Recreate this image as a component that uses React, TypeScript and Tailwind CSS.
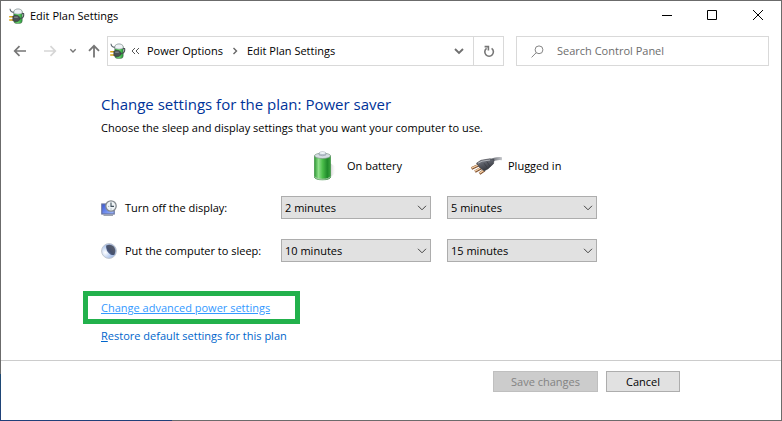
import React from "react";

type IconProps = { className?: string };

function PowerIcon({ className }: IconProps) {
  return (
    <svg className={className} width="16" height="16" viewBox="0 0 16 16" aria-hidden="true">
      <defs>
        <linearGradient id="pw-green" x1="0" x2="1">
          <stop offset="0" stopColor="#2a8f3a" />
          <stop offset="0.5" stopColor="#6fe070" />
          <stop offset="1" stopColor="#1f9433" />
        </linearGradient>
      </defs>
      <rect x="4.8" y="1.6" width="8.4" height="13.8" rx="2.6" fill="url(#pw-green)" stroke="#5c6a60" strokeWidth="0.6" />
      <path d="M5 5.4V3.2Q5.4 1 9 1t4 2.2v2.2q-4 1.4-8 0z" fill="#eef2f6" stroke="#9aa3a8" strokeWidth="0.6" />
      <rect x="7.2" y="0.2" width="3.6" height="1.4" rx="0.6" fill="#c5ccd0" />
      <path d="M1 0.8q0.4 3.4 3.6 3.6" fill="none" stroke="#59636b" strokeWidth="1.1" />
      <path d="M12.8 5.6h1.8q0.8 4.2-3.4 5.2" fill="none" stroke="#4a5256" strokeWidth="1.1" />
      <path d="M0.2 8.8h4M0.2 12h4" stroke="#d9a514" strokeWidth="1.6" />
      <path d="M3.8 8.2 6 7.6h3l2 1.8v2.2l-2 1.8H6l-2.2-.8z" fill="#4b5053" stroke="#2b2f31" strokeWidth="0.5" />
      <path d="M5.2 9.2h3.6" stroke="#9aa1a5" strokeWidth="0.9" />
    </svg>
  );
}

function BatteryIcon({ className }: IconProps) {
  return (
    <svg className={className} width="24" height="32" viewBox="0 0 24 32" aria-hidden="true">
      <defs>
        <linearGradient id="bt-green" x1="0" x2="1">
          <stop offset="0" stopColor="#2f9a35" />
          <stop offset="0.25" stopColor="#8fe08a" />
          <stop offset="0.5" stopColor="#4cbf4b" />
          <stop offset="0.8" stopColor="#1f8a2a" />
          <stop offset="1" stopColor="#3aa23d" />
        </linearGradient>
        <linearGradient id="bt-shadow" x1="0" x2="1">
          <stop offset="0" stopColor="#909090" stopOpacity="0.7" />
          <stop offset="1" stopColor="#ffffff" stopOpacity="0" />
        </linearGradient>
      </defs>
      <path d="M16 29 23 22V17l-6-4z" fill="url(#bt-shadow)" />
      <path d="M1.5 5.8v21.4q1 2.6 8 2.6t8-2.6V5.8z" fill="url(#bt-green)" stroke="#3a8f40" strokeWidth="0.7" />
      <path d="M1.8 26.6q1.4 2.6 7.7 2.6t7.7-2.6" fill="none" stroke="#b5c8b5" strokeWidth="0.9" />
      <ellipse cx="9.5" cy="5.8" rx="8" ry="2.7" fill="#d5dce2" stroke="#7f9a87" strokeWidth="0.7" />
      <path d="M6 5V3.2q0.4-1.4 3.5-1.4T13 3.2V5q-3.5 1.6-7 0z" fill="#b7c0cb" stroke="#8b949f" strokeWidth="0.5" />
      <ellipse cx="9.5" cy="3" rx="3" ry="1" fill="#eff3f6" />
    </svg>
  );
}

function PlugIcon({ className }: IconProps) {
  return (
    <svg className={className} width="32" height="20" viewBox="0 0 32 20" aria-hidden="true">
      <defs>
        <linearGradient id="pl-body" x1="0" y1="0" x2="0.5" y2="1">
          <stop offset="0" stopColor="#8d9098" />
          <stop offset="0.5" stopColor="#5a5d66" />
          <stop offset="1" stopColor="#33353c" />
        </linearGradient>
        <linearGradient id="pl-cord" gradientUnits="userSpaceOnUse" x1="20" y1="0" x2="32" y2="0">
          <stop offset="0" stopColor="#5a5d66" />
          <stop offset="1" stopColor="#c6c8cc" />
        </linearGradient>
      </defs>
      <path d="M20 5.5q5-3.6 12-2.8" fill="none" stroke="url(#pl-cord)" strokeWidth="3" />
      <path d="M1.5 12.6 9 9M5 15.6l7-4M9.5 17.6l5-3.4" stroke="#7a4c2c" strokeWidth="2.8" />
      <path d="M1.5 12.2 9 8.6M5 15.2l7-4M9.5 17.2l5-3.4" stroke="#f3cda2" strokeWidth="1.4" />
      <path d="M6.5 7.2 11 4.3 20 2.8l4 .7-.5 4.2-5.3 5-4 2.2-4.5-3.4z" fill="url(#pl-body)" stroke="#3c3e45" strokeWidth="0.6" />
      <path d="M8 7.2 12 5.2l8-1.2" fill="none" stroke="#b3b5bb" strokeWidth="1" />
      <path d="M14 7.2 17 11.4M17 5.6l3 4.8" stroke="#34363c" strokeWidth="0.6" />
    </svg>
  );
}

function DisplayIcon({ className }: IconProps) {
  return (
    <svg className={className} width="16" height="16" viewBox="0 0 16 16" aria-hidden="true">
      <defs>
        <linearGradient id="ds-blue" x1="0" y1="0" x2="1" y2="1">
          <stop offset="0" stopColor="#3454d8" />
          <stop offset="1" stopColor="#a5bfff" />
        </linearGradient>
      </defs>
      <rect x="0.8" y="4" width="12.4" height="10" fill="url(#ds-blue)" stroke="#6672a0" strokeWidth="1.2" />
      <path d="M2.5 15.2h9.5" stroke="#8d94a3" strokeWidth="1.3" />
      <circle cx="10" cy="6" r="5.2" fill="#eef3f6" stroke="#84898e" strokeWidth="1.3" />
      <path d="M10 2.6v3.8h3" fill="none" stroke="#44525e" strokeWidth="1.1" />
      <path d="M7 6.4h1.2M10 8.4v1.2" stroke="#8e9ca6" strokeWidth="0.8" />
    </svg>
  );
}

function SleepIcon({ className }: IconProps) {
  return (
    <svg className={className} width="16" height="16" viewBox="0 0 16 16" aria-hidden="true">
      <defs>
        <radialGradient id="sl-moon" cx="0.25" cy="0.6" r="0.8">
          <stop offset="0" stopColor="#ffffff" />
          <stop offset="0.5" stopColor="#b8cdf0" />
          <stop offset="1" stopColor="#8fa6d4" />
        </radialGradient>
        <linearGradient id="sl-dark" x1="1" y1="0" x2="0" y2="1">
          <stop offset="0" stopColor="#62646a" />
          <stop offset="0.6" stopColor="#45506e" />
          <stop offset="1" stopColor="#6c8ccc" />
        </linearGradient>
      </defs>
      <circle cx="8" cy="8" r="7.4" fill="url(#sl-moon)" stroke="#c2c7cf" strokeWidth="1" />
      <path d="M5.2 2.6Q9.5 0.8 12.6 3.4 15.4 6.6 13.6 11.4 12 12.8 9.4 11.4 4.6 8.4 5.2 2.6z" fill="url(#sl-dark)" />
    </svg>
  );
}

function Chevron({ className }: IconProps) {
  return (
    <svg className={className} width="10" height="6" viewBox="0 0 10 6" fill="none" stroke="currentColor" aria-hidden="true">
      <path d="M1 0.8 5 4.8 9 0.8" />
    </svg>
  );
}

function TitleBar() {
  return (
    <header className="flex h-[35px] items-start">
      <div className="flex h-[30px] flex-1 items-center gap-[5px] pl-2">
        <PowerIcon />
        <h1 className="text-[11px] leading-4 text-black">Edit Plan Settings</h1>
      </div>
      <div className="flex h-7 text-black">
        <button type="button" aria-label="Minimize" className="flex w-[45px] items-center justify-center">
          <svg width="10" height="10" viewBox="0 0 10 10" stroke="currentColor"><path d="M0 5.5h10" /></svg>
        </button>
        <button type="button" aria-label="Maximize" className="flex w-[46px] items-center justify-center">
          <svg width="10" height="10" viewBox="0 0 10 10" fill="none" stroke="currentColor"><path d="M.5.5h9v9h-9z" /></svg>
        </button>
        <button type="button" aria-label="Close" className="flex w-[46px] items-center justify-center">
          <svg width="10" height="10" viewBox="0 0 10 10" stroke="currentColor"><path d="M0 0l10 10M10 0 0 10" /></svg>
        </button>
      </div>
    </header>
  );
}

function NavBar() {
  return (
    <nav className="flex h-[30px] pr-3" aria-label="Location">
      <div className="flex w-[106px] shrink-0 items-center pl-3 text-[#767676]">
        <button type="button" aria-label="Back" className="w-[14px]">
          <svg width="14" height="12" viewBox="0 0 14 12" fill="none" stroke="currentColor" strokeWidth="1.7"><path d="M13 6H2M6.5 1.2 1.7 6l4.8 4.8" /></svg>
        </button>
        <button type="button" aria-label="Forward" disabled className="ml-4 w-[14px] text-[#d6d6d6]">
          <svg width="14" height="12" viewBox="0 0 14 12" fill="none" stroke="currentColor" strokeWidth="1.7"><path d="M1 6h11M7.5 1.2 12.3 6l-4.8 4.8" /></svg>
        </button>
        <button type="button" aria-label="Recent locations" className="ml-3 w-2">
          <svg width="8" height="6" viewBox="0 0 8 6" fill="none" stroke="currentColor" strokeWidth="1.4"><path d="M1.3 1.2 4 3.9l2.7-2.7" /></svg>
        </button>
        <button type="button" aria-label="Up" className="ml-[11px] w-3">
          <svg width="12" height="14" viewBox="0 0 12 14" fill="none" stroke="currentColor" strokeWidth="1.8"><path d="M6 13.5V2M1 6.8l5-5 5 5" /></svg>
        </button>
      </div>
      <div className="flex min-w-0 flex-1 border border-[#d9d9d9] text-[11px] leading-4 text-black">
        <div className="flex min-w-0 flex-1 items-center pl-0.5">
          <PowerIcon className="shrink-0" />
          <svg className="ml-[5px] shrink-0 text-[#555]" width="9" height="8" viewBox="0 0 9 8" fill="none" stroke="currentColor" aria-hidden="true"><path d="M4 1 1 4l3 3M8 1 5 4l3 3" /></svg>
          <button type="button" className="ml-[7px] whitespace-nowrap">Power Options</button>
          <svg className="mx-[9px] shrink-0 text-[#666]" width="6" height="8" viewBox="0 0 6 8" fill="none" stroke="currentColor" strokeWidth="1.4" aria-hidden="true"><path d="M1.5 1 4.5 4l-3 3" /></svg>
          <button type="button" className="whitespace-nowrap">Edit Plan Settings</button>
          <button type="button" aria-label="Previous locations" className="mr-[9px] ml-auto text-[#707070]">
            <svg width="10" height="8" viewBox="0 0 10 8" fill="none" stroke="currentColor" strokeWidth="1.9"><path d="M1 2l4 4 4-4" /></svg>
          </button>
        </div>
        <button type="button" aria-label="Refresh" className="flex w-[30px] items-center justify-center border-l border-[#d9d9d9] text-[#767676]">
          <svg width="12" height="13" viewBox="0 0 12 13" fill="none" stroke="currentColor" strokeWidth="1.6"><path d="M8.6 3.4A4.3 4.3 0 1 1 3.6 3.4M1.6 1.6h3.8v3.8" /></svg>
        </button>
      </div>
      <label className="ml-3 flex w-[253px] shrink-0 items-center border border-[#d9d9d9] pl-[14px]">
        <svg width="13" height="13" viewBox="0 0 13 13" fill="none" stroke="#858585" aria-hidden="true"><circle cx="8" cy="4.8" r="3.9" /><path d="M5.2 7.7.6 12.4" /></svg>
        <input type="text" aria-label="Search Control Panel" placeholder="Search Control Panel" className="ml-[13px] min-w-0 flex-1 text-[11px] leading-4 outline-none placeholder:text-[#6d6d6d]" />
      </label>
    </nav>
  );
}

function TimeSelect({ id, label, value }: { id: string; label: string; value: string }) {
  return (
    <div className="relative">
      <select id={id} aria-label={label} defaultValue={value} className="block h-[23px] w-full appearance-none border border-[#adadad] bg-[#e1e1e1] pr-6 pl-[3px] text-[11px] leading-4 text-black">
        {["2 minutes", "5 minutes", "10 minutes", "15 minutes"].map((t) => (
          <option key={t}>{t}</option>
        ))}
      </select>
      <Chevron className="pointer-events-none absolute top-[9px] right-1 text-[#444]" />
    </div>
  );
}

export default function App() {
  return (
    <div className="flex min-h-screen flex-col bg-[#6b6b6b] bg-[linear-gradient(#1d4a73,#20407a)] bg-[length:172px_47px] bg-left-bottom bg-no-repeat p-px font-['Open_Sans','Noto_Sans',sans-serif]">
      <div className="flex flex-1 flex-col bg-white">
        <TitleBar />
        <NavBar />
        <main className="pl-[100px] text-[11px] leading-4 text-black">
          <h2 className="mt-7 text-[15px] leading-5 text-[#003399]">Change settings for the plan: Power saver</h2>
          <p className="mt-[6px]">Choose the sleep and display settings that you want your computer to use.</p>
          <div className="mt-3.5 grid grid-cols-[164px_150px_150px] items-center gap-x-4">
            <div className="col-start-2 flex h-8 items-center pl-8">
              <BatteryIcon className="mr-[10px] shrink-0" />
              On battery
            </div>
            <div className="flex h-8 items-center pl-[23px]">
              <PlugIcon className="mr-[6px] shrink-0" />
              Plugged in
            </div>
            <label htmlFor="display-battery" className="mt-3.5 flex items-center gap-2 whitespace-nowrap">
              <DisplayIcon className="shrink-0" />
              Turn off the display:
            </label>
            <div className="mt-3.5"><TimeSelect id="display-battery" label="Turn off the display, on battery" value="2 minutes" /></div>
            <div className="mt-3.5"><TimeSelect id="display-plugged" label="Turn off the display, plugged in" value="5 minutes" /></div>
            <label htmlFor="sleep-battery" className="mt-5 flex items-center gap-2 whitespace-nowrap">
              <SleepIcon className="shrink-0" />
              Put the computer to sleep:
            </label>
            <div className="mt-5"><TimeSelect id="sleep-battery" label="Put the computer to sleep, on battery" value="10 minutes" /></div>
            <div className="mt-5"><TimeSelect id="sleep-plugged" label="Put the computer to sleep, plugged in" value="15 minutes" /></div>
          </div>
          <div className="mt-[29px] -ml-[18px] flex h-[33px] w-[217px] items-center border-[5px] border-[#22b14c] pl-[13px]">
            <a href="#advanced" className="whitespace-nowrap text-[#3399ff] underline">Change advanced power settings</a>
          </div>
          <div className="mt-1">
            <a href="#restore" className="text-[#0066cc]"><span className="underline">R</span>estore default settings for this plan</a>
          </div>
        </main>
        <footer className="mt-4 flex justify-end gap-2 border-t border-[#cccccc] pt-[10px] pr-[101px] text-[11px] leading-4">
          <button type="button" disabled className="h-[21px] w-[105px] border border-[#bfbfbf] bg-[#cccccc] text-[#838383]">Save changes</button>
          <button type="button" className="h-[21px] w-[74px] border border-[#adadad] bg-[#e1e1e1] text-black">Cancel</button>
        </footer>
      </div>
    </div>
  );
}
